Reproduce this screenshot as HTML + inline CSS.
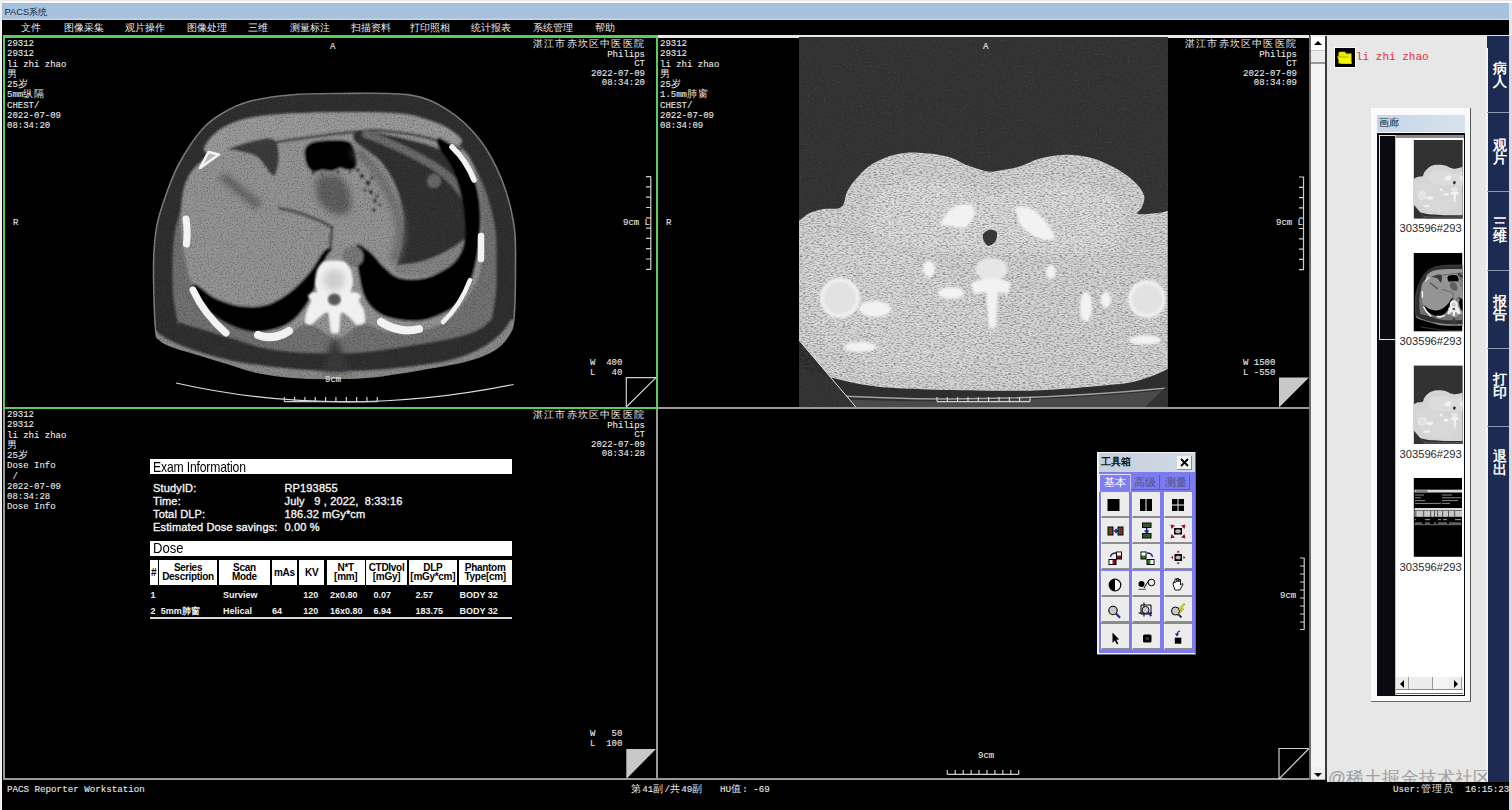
<!DOCTYPE html>
<html><head><meta charset="utf-8">
<style>
*{box-sizing:border-box}
html,body{margin:0;padding:0}
body{width:1512px;height:810px;overflow:hidden;background:#e6e6ea;position:relative;font-family:"Liberation Sans",sans-serif}
.a{position:absolute}
.cj{font-size:9.6px;letter-spacing:1.2px;line-height:0;-webkit-text-stroke:0}
.mono{font-family:"Liberation Mono",monospace;font-size:9px;line-height:10.25px;color:#e8e8e8;white-space:pre;-webkit-text-stroke:0.1px #e8e8e8}
.menu span{position:absolute;top:22px;font-size:9.6px;color:#e8e8e8;white-space:nowrap;line-height:12px}
.tab{position:absolute;left:1487px;width:22px;background:#1d2a52;color:#fff;font-weight:bold;font-size:13px;line-height:13px;text-align:center;border-top:1px solid #8d97b0}
.tab span{position:absolute;left:4px;width:14px;word-break:break-all}
.rp{white-space:nowrap}
.rl{font-size:11px;line-height:12.9px;color:#f4f4f4;letter-spacing:0.15px;-webkit-text-stroke:0.35px #f4f4f4}
.th{top:560px;height:25.2px;background:#fff;color:#000;font-size:10px;line-height:9.6px;text-align:center;padding-top:2.5px;font-weight:bold;overflow:hidden;white-space:nowrap;letter-spacing:-0.3px}
.td{font-size:9px;line-height:10px;color:#f0f0f0;font-weight:bold;white-space:nowrap}
</style></head><body>
<!-- top white line -->
<div class="a" style="left:0;top:1px;width:1512px;height:2px;background:#fbfbfd"></div>
<div class="a" style="left:0;top:0;width:2px;height:810px;background:#f2f2f4"></div>
<!-- title bar -->
<div class="a" style="left:2px;top:3px;width:1507px;height:17px;background:linear-gradient(#9fb9d3 0,#a6c2de 1.5px,#a7c1da 15px,#c2d8ee 16px)"></div>
<div class="a" style="left:4.5px;top:6px;font-size:9.4px;line-height:11px;color:#1a2840">PACS系统</div>
<!-- menu bar -->
<div class="a menu" style="left:2px;top:20px;width:1507px;height:15px;background:#000">
</div>
<div class="menu">
<span style="left:21px">文件</span>
<span style="left:64px">图像采集</span>
<span style="left:125px">观片操作</span>
<span style="left:187px">图像处理</span>
<span style="left:248px">三维</span>
<span style="left:290px">测量标注</span>
<span style="left:351px">扫描资料</span>
<span style="left:410px">打印照相</span>
<span style="left:471px">统计报表</span>
<span style="left:533px">系统管理</span>
<span style="left:595px">帮助</span>
</div>
<!-- viewport area -->
<div class="a" style="left:2px;top:35px;width:1308px;height:747px;background:#000"></div>
<!-- viewport borders -->
<div class="a" style="left:657px;top:35px;width:652px;height:3px;background:#e8e8e8"></div>
<div class="a" style="left:3px;top:407px;width:1306px;height:2px;background:#9a9a9a"></div>
<div class="a" style="left:656px;top:37px;width:2px;height:742px;background:#9a9a9a"></div>
<div class="a" style="left:3px;top:778px;width:1306px;height:2px;background:#9a9a9a"></div>
<div class="a" style="left:3px;top:408px;width:2px;height:371px;background:#9a9a9a"></div>
<!-- active green border -->
<div class="a" style="left:3px;top:35px;width:655px;height:374px;border:2px solid #5ccc5c;border-top-width:3px"></div>


<svg class="a" style="left:0;top:0" width="660" height="410" viewBox="0 0 660 410">
<g id="ctTL">
<defs><filter id="bl1" x="-5%" y="-5%" width="110%" height="110%"><feGaussianBlur stdDeviation="1.3"/></filter><filter id="bl3" x="-20%" y="-20%" width="140%" height="140%"><feGaussianBlur stdDeviation="3"/></filter></defs>
<path d="M335.0 93.5 C354.8 93.5 390.1 92.0 409.0 94.9 C427.9 97.8 436.6 103.1 448.5 110.7 C460.4 118.3 471.2 128.8 480.1 140.3 C489.0 151.8 496.2 166.0 501.8 179.8 C507.4 193.6 511.4 209.6 513.7 223.3 C516.0 237.0 515.5 246.2 515.5 262.0 C515.5 277.8 515.2 305.7 514.0 318.0 C512.8 330.3 511.3 330.7 508.0 336.0 C504.7 341.3 501.0 345.8 494.0 350.0 C487.0 354.2 478.3 357.7 466.0 361.0 C453.7 364.3 436.0 366.9 420.0 369.6 C404.0 372.3 384.2 375.6 370.0 377.0 C355.8 378.4 347.5 378.2 335.0 378.3 C322.5 378.4 307.8 378.5 295.0 377.5 C282.2 376.5 269.5 374.9 258.0 372.5 C246.5 370.1 236.5 366.2 226.0 363.0 C215.5 359.8 204.0 356.2 195.0 353.5 C186.0 350.8 177.8 348.8 172.0 346.5 C166.2 344.2 162.8 343.1 160.0 340.0 C157.2 336.9 156.5 340.8 155.4 328.0 C154.3 315.2 153.3 280.2 153.6 263.0 C153.9 245.8 154.8 236.8 157.0 225.0 C159.2 213.2 163.2 202.5 167.0 192.0 C170.8 181.5 174.2 172.4 180.0 162.0 C185.8 151.6 195.0 137.6 202.0 129.5 C209.0 121.4 214.2 118.2 222.0 113.5 C229.8 108.8 237.7 104.6 249.0 101.5 C260.3 98.4 275.7 96.3 290.0 95.0 C304.3 93.7 315.2 93.5 335.0 93.5Z" fill="#303030" stroke="#7a7a7a" stroke-width="1.6"/>
<clipPath id="bodyclip"><path d="M335.0 93.5 C354.8 93.5 390.1 92.0 409.0 94.9 C427.9 97.8 436.6 103.1 448.5 110.7 C460.4 118.3 471.2 128.8 480.1 140.3 C489.0 151.8 496.2 166.0 501.8 179.8 C507.4 193.6 511.4 209.6 513.7 223.3 C516.0 237.0 515.5 246.2 515.5 262.0 C515.5 277.8 515.2 305.7 514.0 318.0 C512.8 330.3 511.3 330.7 508.0 336.0 C504.7 341.3 501.0 345.8 494.0 350.0 C487.0 354.2 478.3 357.7 466.0 361.0 C453.7 364.3 436.0 366.9 420.0 369.6 C404.0 372.3 384.2 375.6 370.0 377.0 C355.8 378.4 347.5 378.2 335.0 378.3 C322.5 378.4 307.8 378.5 295.0 377.5 C282.2 376.5 269.5 374.9 258.0 372.5 C246.5 370.1 236.5 366.2 226.0 363.0 C215.5 359.8 204.0 356.2 195.0 353.5 C186.0 350.8 177.8 348.8 172.0 346.5 C166.2 344.2 162.8 343.1 160.0 340.0 C157.2 336.9 156.5 340.8 155.4 328.0 C154.3 315.2 153.3 280.2 153.6 263.0 C153.9 245.8 154.8 236.8 157.0 225.0 C159.2 213.2 163.2 202.5 167.0 192.0 C170.8 181.5 174.2 172.4 180.0 162.0 C185.8 151.6 195.0 137.6 202.0 129.5 C209.0 121.4 214.2 118.2 222.0 113.5 C229.8 108.8 237.7 104.6 249.0 101.5 C260.3 98.4 275.7 96.3 290.0 95.0 C304.3 93.7 315.2 93.5 335.0 93.5Z"/></clipPath>
<path clip-path="url(#bodyclip)" d="M150 336 Q170 354 230 368 Q335 388 440 370 Q500 358 518 322" fill="none" stroke="#8a8a8a" stroke-width="15" filter="url(#bl1)"/>
<g filter="url(#bl1)">
<path d="M335.1 112.5 C345.3 112.4 360.4 111.9 372.3 112.1 C384.2 112.3 397.7 112.7 406.3 113.7 C414.9 114.8 418.5 116.3 423.8 118.5 C429.1 120.6 433.3 123.3 438.0 126.6 C442.8 129.8 447.9 133.6 452.4 137.8 C456.9 142.1 461.2 146.8 465.0 151.9 C468.9 156.9 472.3 162.4 475.5 168.2 C478.7 174.0 481.6 180.5 484.2 186.9 C486.7 193.2 488.8 199.9 490.6 206.5 C492.4 213.1 494.0 220.4 494.9 226.4 C495.9 232.3 496.2 236.5 496.4 242.4 C496.7 248.4 496.5 253.9 496.5 262.0 C496.5 270.1 496.9 281.9 496.2 290.9 C495.5 299.9 493.4 310.9 492.4 315.9 C491.4 321.0 490.8 319.9 490.0 321.0 C489.2 322.2 488.7 321.9 487.8 322.8 C486.8 323.6 485.6 325.3 484.5 326.3 C483.4 327.2 483.0 327.5 481.1 328.6 C479.1 329.6 476.3 331.2 472.8 332.6 C469.2 334.0 465.2 335.4 459.7 336.8 C454.2 338.2 447.3 339.6 440.0 340.9 C432.7 342.3 424.2 343.6 415.9 344.9 C407.7 346.3 398.6 347.8 390.5 349.0 C382.5 350.2 374.0 351.4 367.4 352.1 C360.9 352.8 356.6 353.0 351.2 353.2 C345.8 353.4 340.8 353.3 334.9 353.3 C328.9 353.3 321.8 353.4 315.5 353.3 C309.1 353.2 302.8 353.0 296.8 352.6 C290.8 352.1 284.9 351.5 279.3 350.8 C273.7 350.0 268.3 349.2 263.3 348.1 C258.2 347.0 254.2 345.7 249.2 344.2 C244.2 342.7 238.7 340.8 233.4 339.1 C228.1 337.4 222.5 335.8 217.3 334.2 C212.1 332.6 206.9 331.0 202.2 329.6 C197.6 328.2 192.9 326.9 189.3 325.8 C185.7 324.7 182.9 323.8 180.7 323.1 C178.4 322.4 176.7 321.6 176.0 321.4 C175.3 321.2 176.3 321.3 176.6 321.9 C177.0 322.6 177.6 324.3 177.9 325.0 C178.2 325.7 179.3 330.9 178.5 326.2 C177.7 321.4 174.2 307.1 173.2 296.6 C172.2 286.1 172.6 272.0 172.6 263.2 C172.6 254.4 173.0 249.5 173.5 243.7 C174.0 238.0 174.6 233.6 175.6 228.6 C176.7 223.6 178.0 218.8 179.5 213.7 C181.0 208.7 183.1 203.4 184.8 198.5 C186.6 193.6 188.3 188.9 190.3 184.3 C192.2 179.8 193.9 176.1 196.6 171.2 C199.3 166.4 203.0 160.4 206.3 155.5 C209.6 150.6 213.6 145.3 216.4 141.9 C219.2 138.5 220.7 137.3 223.3 135.3 C225.8 133.3 228.5 131.7 231.7 129.8 C234.8 128.0 238.5 125.8 242.2 124.1 C245.9 122.5 249.1 121.1 254.0 119.8 C258.8 118.5 265.0 117.4 271.2 116.4 C277.5 115.4 285.1 114.5 291.7 113.9 C298.4 113.3 303.8 113.0 311.0 112.7 C318.2 112.5 324.9 112.6 335.1 112.5Z" fill="#727272"/>
<path d="M236.5 147.0 C252.7 143.0 276.9 139.2 300.0 136.0 C323.1 132.8 352.7 128.2 375.0 128.0 C397.3 127.8 418.4 130.7 433.8 135.0 C449.2 139.3 459.7 143.8 467.4 154.0 C475.1 164.2 477.6 178.5 480.0 196.0 C482.4 213.5 483.4 243.3 482.0 259.0 C480.6 274.7 478.3 279.2 471.6 290.0 C464.9 300.8 455.3 317.0 442.0 324.0 C428.7 331.0 405.1 332.0 391.8 332.0 C378.6 332.0 371.6 322.9 362.5 324.0 C353.4 325.1 346.1 338.6 337.0 338.6 C327.9 338.6 317.8 324.4 308.0 324.0 C298.2 323.6 292.5 336.7 278.5 336.0 C264.5 335.3 238.0 327.7 224.0 320.0 C210.0 312.3 201.6 303.7 194.6 290.0 C187.6 276.3 183.8 255.1 182.0 238.0 C180.2 220.9 180.5 200.5 184.0 187.5 C187.5 174.5 194.2 166.8 203.0 160.0 C211.8 153.2 220.3 151.0 236.5 147.0Z" fill="#949494"/>
<path d="M204.0 148.0 C205.2 143.7 212.7 133.3 222.0 128.0 C231.3 122.7 241.2 118.7 260.0 116.0 C278.8 113.3 311.7 112.3 335.0 112.0 C358.3 111.7 382.5 112.0 400.0 114.0 C417.5 116.0 429.7 119.7 440.0 124.0 C450.3 128.3 460.3 136.3 462.0 140.0 C463.7 143.7 457.0 146.7 450.0 146.0 C443.0 145.3 433.3 138.3 420.0 136.0 C406.7 133.7 390.0 131.8 370.0 132.0 C350.0 132.2 320.8 134.8 300.0 137.0 C279.2 139.2 259.2 142.2 245.0 145.0 C230.8 147.8 221.8 153.5 215.0 154.0 C208.2 154.5 202.8 152.3 204.0 148.0Z" fill="#9a9a9a"/>
<path d="M236 149 Q320 134 375 130 Q430 134 462 150" fill="none" stroke="#404040" stroke-width="2.5"/>
<path d="M363.0 131.0 C372.3 131.0 396.3 136.5 410.0 140.0 C423.7 143.5 435.3 146.2 445.0 152.0 C454.7 157.8 462.7 165.3 468.0 175.0 C473.3 184.7 475.7 198.3 477.0 210.0 C478.3 221.7 477.5 236.3 476.0 245.0 C474.5 253.7 472.3 258.2 468.0 262.0 C463.7 265.8 458.0 266.3 450.0 268.0 C442.0 269.7 428.7 272.0 420.0 272.0 C411.3 272.0 401.0 273.0 398.0 268.0 C395.0 263.0 401.2 250.8 402.0 242.0 C402.8 233.2 404.0 224.2 403.0 215.0 C402.0 205.8 399.8 196.0 396.0 187.0 C392.2 178.0 387.0 168.8 380.0 161.0 C373.0 153.2 356.8 145.0 354.0 140.0 C351.2 135.0 353.7 131.0 363.0 131.0Z" fill="#333333"/>
<path d="M366 134 Q410 150 440 170 Q460 185 466 200" fill="none" stroke="#6c6c6c" stroke-width="8" stroke-linecap="round"/>
<circle cx="434" cy="181" r="7" fill="#6a6a6a"/>
<path d="M396.3 266.0 C400.0 264.0 411.9 264.3 420.0 262.0 C428.1 259.7 437.2 256.2 445.0 252.0 C452.8 247.8 462.0 241.7 466.7 236.7 C471.4 231.7 471.8 220.4 473.0 222.0 C474.2 223.6 475.8 239.3 474.0 246.0 C472.2 252.7 467.7 257.7 462.0 262.0 C456.3 266.3 447.4 269.7 440.0 272.0 C432.6 274.3 424.4 275.7 417.4 276.0 C410.4 276.3 401.5 275.7 398.0 274.0 C394.5 272.3 392.6 268.0 396.3 266.0Z" fill="#848484"/>
<path d="M229.3 148.7 C234.4 146.6 261.0 137.6 269.2 138.2 C277.4 138.8 277.8 145.9 278.6 152.2 C279.4 158.4 277.4 174.9 273.9 175.7 C270.4 176.5 263.3 161.1 257.4 157.0 C251.5 152.9 243.4 152.4 238.7 151.0 C234.0 149.6 224.2 150.8 229.3 148.7Z" fill="#3c3c3c"/>
<path d="M318.0 178.0 C321.3 174.0 332.8 174.0 338.0 176.0 C343.2 178.0 347.0 184.3 349.0 190.0 C351.0 195.7 352.3 206.0 350.0 210.0 C347.7 214.0 340.3 215.7 335.0 214.0 C329.7 212.3 320.8 206.0 318.0 200.0 C315.2 194.0 314.7 182.0 318.0 178.0Z" fill="#606060" filter="url(#bl3)"/>
<path d="M222 176 Q240 190 259 206" stroke="#606060" stroke-width="8" fill="none" filter="url(#bl3)"/>
<path d="M278 208 Q305 212 332 227 L330 250" stroke="#4e4e4e" stroke-width="3" fill="none"/>
<path d="M306.0 147.0 C308.2 144.2 311.2 142.0 318.0 141.0 C324.8 140.0 340.8 139.2 347.0 141.0 C353.2 142.8 353.5 147.7 355.0 152.0 C356.5 156.3 357.2 164.0 356.0 167.0 C354.8 170.0 350.7 169.8 348.0 170.0 C345.3 170.2 342.7 167.8 340.0 168.0 C337.3 168.2 335.0 170.7 332.0 171.0 C329.0 171.3 325.0 169.8 322.0 170.0 C319.0 170.2 316.3 172.5 314.0 172.0 C311.7 171.5 309.5 169.3 308.0 167.0 C306.5 164.7 305.3 161.3 305.0 158.0 C304.7 154.7 303.8 149.8 306.0 147.0Z" fill="#050505"/>
<path d="M356 150 Q385 175 398 215 Q404 240 393 262" fill="none" stroke="#707070" stroke-width="9" filter="url(#bl3)"/>
<g fill="#141414"><circle cx="362" cy="176" r="2.2"/><circle cx="368" cy="183" r="2.4"/><circle cx="371" cy="192" r="2.2"/><circle cx="375" cy="201" r="2"/><circle cx="365" cy="190" r="1.6"/><circle cx="358" cy="170" r="1.8"/><circle cx="374" cy="210" r="1.8"/><circle cx="377" cy="196" r="1.5"/><circle cx="380" cy="205" r="1.4"/><circle cx="372" cy="178" r="1.4"/><circle cx="313" cy="173" r="1.5"/><circle cx="322" cy="174" r="1.3"/><circle cx="338" cy="172" r="1.4"/><circle cx="350" cy="172" r="1.3"/></g>
<path d="M322 372 L330 345 L334 337 L339 345 L350 372Z" fill="#3a3a3a" filter="url(#bl3)"/>
<path d="M192.5 288.0 C194.7 292.5 203.4 305.7 210.0 312.0 C216.6 318.3 224.0 322.7 232.0 326.0 C240.0 329.3 248.7 332.3 258.0 332.0 C267.3 331.7 279.8 328.7 288.0 324.0 C296.2 319.3 302.0 311.3 307.0 304.0 C312.0 296.7 314.8 287.7 318.0 280.0 C321.2 272.3 323.7 263.2 326.0 258.0 C328.3 252.8 332.3 250.2 332.0 249.0 C331.7 247.8 327.7 247.2 324.0 251.0 C320.3 254.8 315.7 265.2 310.0 272.0 C304.3 278.8 297.3 286.5 290.0 292.0 C282.7 297.5 274.3 302.7 266.0 305.0 C257.7 307.3 248.5 307.2 240.0 306.0 C231.5 304.8 222.2 301.5 215.0 298.0 C207.8 294.5 200.8 286.7 197.0 285.0 C193.2 283.3 190.3 283.5 192.5 288.0Z" fill="#000"/>
<path d="M359.6 278.0 C361.3 287.0 362.6 294.0 366.0 300.0 C369.4 306.0 374.3 310.7 380.0 314.0 C385.7 317.3 392.5 319.0 400.0 320.0 C407.5 321.0 416.1 322.0 424.8 320.0 C433.6 318.0 445.3 313.3 452.5 308.0 C459.7 302.7 464.1 295.7 468.0 288.0 C471.9 280.3 474.0 270.8 476.0 262.0 C478.0 253.2 479.3 244.5 480.0 235.0 C480.7 225.5 481.0 214.5 480.0 205.0 C479.0 195.5 477.3 186.7 474.0 178.0 C470.7 169.3 465.7 159.7 460.0 153.0 C454.3 146.3 443.7 139.2 440.0 138.0 C436.3 136.8 436.0 141.0 438.0 146.0 C440.0 151.0 448.0 159.0 452.0 168.0 C456.0 177.0 459.8 189.7 462.0 200.0 C464.2 210.3 465.0 221.7 465.0 230.0 C465.0 238.3 464.5 244.0 462.0 250.0 C459.5 256.0 456.2 261.3 450.0 266.0 C443.8 270.7 433.3 276.0 425.0 278.0 C416.7 280.0 406.7 279.7 400.0 278.0 C393.3 276.3 390.0 272.3 385.0 268.0 C380.0 263.7 374.8 255.7 370.0 252.0 C365.2 248.3 357.7 241.7 356.0 246.0 C354.3 250.3 357.9 269.0 359.6 278.0Z" fill="#000"/>
<circle cx="353" cy="256.5" r="10.5" fill="#7a7a7a"/>
</g>
<filter id="nzl" x="150" y="90" width="370" height="290" filterUnits="userSpaceOnUse"><feTurbulence type="fractalNoise" baseFrequency="0.7 0.7" numOctaves="2" seed="5"/><feColorMatrix type="matrix" values="0 0 0 0 0  0 0 0 0 0  0 0 0 0 0  2.4 0 0 0 -1.1"/></filter>
</g><rect x="150" y="90" width="370" height="290" fill="#000" filter="url(#nzl)" clip-path="url(#bodyclip)" opacity="0.3"/><g id="ctTL2">
<path d="M334.0 260.5 C336.6 260.5 343.0 260.9 345.0 262.0 C347.0 263.1 350.1 267.6 351.0 270.0 C351.9 272.4 353.0 280.4 353.0 283.0 C353.0 285.6 350.6 290.9 351.0 292.0 C351.4 293.1 354.8 291.5 356.0 292.0 C357.2 292.5 360.6 294.9 361.0 296.0 C361.4 297.1 358.6 299.4 359.0 301.0 C359.4 302.6 363.3 307.6 364.0 310.0 C364.7 312.4 365.8 320.2 365.0 322.0 C364.2 323.8 358.9 325.6 357.0 325.0 C355.1 324.4 350.9 318.4 349.0 317.0 C347.1 315.6 342.2 311.2 341.0 313.0 C339.8 314.8 340.2 329.8 339.0 332.0 C337.8 334.2 332.3 334.2 331.0 332.0 C329.7 329.8 329.3 314.8 328.0 313.0 C326.7 311.2 322.0 315.6 320.0 317.0 C318.0 318.4 312.8 324.4 311.0 325.0 C309.2 325.6 305.5 323.8 305.0 322.0 C304.5 320.2 306.3 312.4 307.0 310.0 C307.7 307.6 310.9 302.6 311.0 301.0 C311.1 299.4 307.8 297.1 308.0 296.0 C308.2 294.9 311.9 292.5 313.0 292.0 C314.1 291.5 316.8 293.1 317.0 292.0 C317.2 290.9 315.0 285.6 315.0 283.0 C315.0 280.4 316.1 272.4 317.0 270.0 C317.9 267.6 321.0 263.1 323.0 262.0 C325.0 260.9 331.4 260.5 334.0 260.5Z" fill="#f0f0f0" filter="url(#bl1)"/>
<ellipse cx="334" cy="280" rx="11" ry="11" fill="#cfcfcf" filter="url(#bl3)"/>
<ellipse cx="334.4" cy="299.5" rx="6.5" ry="6" fill="#585858" filter="url(#bl1)"/>
<g fill="none" stroke="#f2f2f2" stroke-linecap="round"><path d="M200 168 L208.5 152 L219 154.5Z" stroke-width="2.6" fill="#b8b8b8" stroke-linejoin="round"/><path d="M186 219 Q188 231 186.5 244" stroke-width="7"/><path d="M193 290 Q204 314 226 333" stroke-width="7"/><path d="M258 335 Q273 341 289 331" stroke-width="8"/><path d="M381 322 Q400 334 419 329" stroke-width="8"/><path d="M470 280 Q460 306 443 322" stroke-width="4.5"/><path d="M481 236 L481 259" stroke-width="6.5"/><path d="M452 147 Q466 160 474 180" stroke-width="5.5"/></g>
<path d="M176 383 Q340 420 513.6 384.5" fill="none" stroke="#dcdcdc" stroke-width="1.2"/>
</g></svg>
<svg class="a" style="left:0;top:0" width="1310" height="410" viewBox="0 0 1310 410">
<g id="ctTR">
<defs><filter id="tb" x="-5%" y="-5%" width="110%" height="110%"><feGaussianBlur stdDeviation="2"/></filter><filter id="tb1" x="-10%" y="-10%" width="120%" height="120%"><feGaussianBlur stdDeviation="0.8"/></filter><clipPath id="fov"><path d="M799 37H1168V385L1145 407H855.8L799 340.2Z"/></clipPath><clipPath id="trbody"><path d="M798.9 220.9 C800.7 219.6 805.7 215.0 809.8 213.0 C813.9 211.0 818.3 210.0 823.6 209.0 C828.9 208.0 837.5 209.9 841.4 207.0 C845.3 204.1 844.7 196.2 847.3 191.3 C849.9 186.4 852.9 182.0 857.2 177.4 C861.5 172.8 866.8 167.4 873.0 163.6 C879.2 159.8 887.1 156.5 894.7 154.7 C902.3 152.9 909.6 152.4 918.5 152.7 C927.4 153.0 939.8 154.5 948.0 156.7 C956.2 158.8 961.3 163.1 967.9 165.6 C974.5 168.1 982.3 170.7 987.6 171.5 C992.9 172.3 994.5 171.3 999.8 170.5 C1005.1 169.7 1012.9 168.6 1019.5 166.6 C1026.1 164.6 1031.7 160.7 1039.3 158.7 C1046.9 156.7 1056.4 154.9 1065.0 154.7 C1073.6 154.5 1082.5 155.6 1090.7 157.7 C1098.9 159.8 1107.2 163.6 1114.4 167.5 C1121.7 171.4 1129.3 176.8 1134.2 181.4 C1139.1 186.0 1142.7 190.9 1144.0 195.2 C1145.3 199.5 1143.0 203.9 1142.0 207.0 C1141.0 210.1 1135.3 213.0 1138.0 214.0 C1140.7 215.0 1153.0 213.5 1157.9 213.0 C1162.9 212.5 1166.1 211.3 1167.7 211.0 L1167.7 369 C1150 378 1130 384 1116 384.3 C1080 388 1040 391 1020 390.8 C980 391 920 390 880 387 C855 384 835 379 820 374 L799 368 Z"/></clipPath><filter id="nz" x="799" y="150" width="369" height="245" filterUnits="userSpaceOnUse"><feTurbulence type="fractalNoise" baseFrequency="0.35 0.9" numOctaves="2" seed="7"/><feColorMatrix type="matrix" values="0 0 0 0 0  0 0 0 0 0  0 0 0 0 0  2.4 0 0 0 -1.05"/></filter><filter id="nz2" x="799" y="37" width="369" height="370" filterUnits="userSpaceOnUse"><feTurbulence type="fractalNoise" baseFrequency="0.5 0.5" numOctaves="2" seed="11"/><feColorMatrix type="matrix" values="0 0 0 0 1  0 0 0 0 1  0 0 0 0 1  2.5 0 0 0 -1.45"/></filter></defs>
<rect x="799" y="37" width="369" height="370" fill="#323232"/>
</g><ellipse cx="983" cy="240" rx="215" ry="205" fill="#fff" filter="url(#nz2)" opacity="0.12"/><g id="ctTR1">
<g clip-path="url(#fov)">
<path d="M799 372 Q980 395 1168 368 V407 H799Z" fill="#2e2e2e"/>
<path d="M799 397 Q980 408 1168 390 V407 H799Z" fill="#4a4a4a"/>
<path d="M820 394.5 Q980 406 1168 388" fill="none" stroke="#a0a0a0" stroke-width="1.6"/>
<path d="M798.9 220.9 C800.7 219.6 805.7 215.0 809.8 213.0 C813.9 211.0 818.3 210.0 823.6 209.0 C828.9 208.0 837.5 209.9 841.4 207.0 C845.3 204.1 844.7 196.2 847.3 191.3 C849.9 186.4 852.9 182.0 857.2 177.4 C861.5 172.8 866.8 167.4 873.0 163.6 C879.2 159.8 887.1 156.5 894.7 154.7 C902.3 152.9 909.6 152.4 918.5 152.7 C927.4 153.0 939.8 154.5 948.0 156.7 C956.2 158.8 961.3 163.1 967.9 165.6 C974.5 168.1 982.3 170.7 987.6 171.5 C992.9 172.3 994.5 171.3 999.8 170.5 C1005.1 169.7 1012.9 168.6 1019.5 166.6 C1026.1 164.6 1031.7 160.7 1039.3 158.7 C1046.9 156.7 1056.4 154.9 1065.0 154.7 C1073.6 154.5 1082.5 155.6 1090.7 157.7 C1098.9 159.8 1107.2 163.6 1114.4 167.5 C1121.7 171.4 1129.3 176.8 1134.2 181.4 C1139.1 186.0 1142.7 190.9 1144.0 195.2 C1145.3 199.5 1143.0 203.9 1142.0 207.0 C1141.0 210.1 1135.3 213.0 1138.0 214.0 C1140.7 215.0 1153.0 213.5 1157.9 213.0 C1162.9 212.5 1166.1 211.3 1167.7 211.0 L1167.7 369 C1150 378 1130 384 1116 384.3 C1080 388 1040 391 1020 390.8 C980 391 920 390 880 387 C855 384 835 379 820 374 L799 368 Z" fill="#d4d4d4"/>
<g filter="url(#tb)">
<path d="M885.0 188.0 C898.3 180.0 932.5 180.8 950.0 182.0 C967.5 183.2 975.0 195.0 990.0 195.0 C1005.0 195.0 1021.7 182.8 1040.0 182.0 C1058.3 181.2 1085.8 184.5 1100.0 190.0 C1114.2 195.5 1123.3 205.0 1125.0 215.0 C1126.7 225.0 1120.8 243.3 1110.0 250.0 C1099.2 256.7 1080.0 255.0 1060.0 255.0 C1040.0 255.0 1013.3 250.8 990.0 250.0 C966.7 249.2 940.0 253.3 920.0 250.0 C900.0 246.7 875.8 240.3 870.0 230.0 C864.2 219.7 871.7 196.0 885.0 188.0Z" fill="#dcdcdc"/>
<path d="M810.0 250.0 C816.7 235.0 841.7 238.3 860.0 240.0 C878.3 241.7 900.0 250.0 920.0 260.0 C940.0 270.0 966.7 286.7 980.0 300.0 C993.3 313.3 1003.3 328.3 1000.0 340.0 C996.7 351.7 980.0 365.0 960.0 370.0 C940.0 375.0 903.3 376.7 880.0 370.0 C856.7 363.3 831.7 350.0 820.0 330.0 C808.3 310.0 803.3 265.0 810.0 250.0Z" fill="#d8d8d8"/>
</g>
</g></g><rect x="799" y="150" width="369" height="245" fill="#000" filter="url(#nz)" clip-path="url(#trbody)" opacity="0.4"/><g id="ctTR2"><g clip-path="url(#fov)">
<g fill="#f2f2f2" filter="url(#tb1)"><ellipse cx="991.5" cy="269.5" rx="16" ry="11.5" fill="#e6e6e6"/><path d="M971 283 Q991 274 1011 283 L1008 294 L998 292 L996 328 L989 328 L986 292 L974 294Z"/><ellipse cx="875" cy="309" rx="16" ry="8"/><ellipse cx="860" cy="347" rx="16" ry="5"/><ellipse cx="929" cy="269" rx="6" ry="8"/><ellipse cx="951" cy="293" rx="13" ry="6"/><ellipse cx="1051" cy="272" rx="5" ry="7"/><ellipse cx="1086" cy="307" rx="6" ry="15"/><ellipse cx="1106" cy="300" rx="5" ry="8"/><ellipse cx="1145" cy="340" rx="16" ry="4.5"/><path d="M940 225 Q950 200 972 205 Q980 215 965 228 Z"/><path d="M1015 208 Q1035 200 1056 238 Q1040 245 1020 225 Z"/></g>
<g fill="#e2e2e2" stroke="#f0f0f0" stroke-width="4" filter="url(#tb1)"><circle cx="840" cy="298" r="18"/><circle cx="1147" cy="299" r="17"/></g>
<path d="M983 234 Q990 226 997 232 Q998 244 988 246 Q982 242 983 234Z" fill="#383838"/>
</g>
<path d="M799 340.2 L855.8 407" stroke="#e0e0e0" stroke-width="1"/>
</g></svg>
<!-- ===== overlays ===== -->
<svg class="a" style="left:0;top:0" width="1512" height="810" viewBox="0 0 1512 810">
 <g stroke="#cfcfcf" stroke-width="1.2" fill="none">
  <!-- TL right ruler -->
  <path d="M650.8 176.6V269.3M646 176.6H651M646 186.9H651M646 197.2H651M646 207.5H651M646 217.8H651M646 228.1H651M646 238.4H651M646 248.7H651M646 259H651M646 269.3H651"/>
  <!-- TR right ruler -->
  <path d="M1303.5 177V269.6M1299 177H1304M1299 187.3H1304M1299 197.6H1304M1299 207.9H1304M1299 218.2H1304M1299 228.5H1304M1299 238.8H1304M1299 249.1H1304M1299 259.4H1304M1299 269.6H1304"/>
  <!-- BR right ruler -->
  <path d="M1304.2 558V629.5M1300 558H1304.5M1300 566H1304.5M1300 574H1304.5M1300 582H1304.5M1300 590H1304.5M1300 598H1304.5M1300 606H1304.5M1300 614H1304.5M1300 622H1304.5M1300 629.5H1304.5"/>
  <!-- BR bottom ruler -->
  <path d="M947.3 774.4H1018.7M947.3 770V774.4M955.2 770V774.4M963.2 770V774.4M971.1 770V774.4M979 770V774.4M987 770V774.4M994.9 770V774.4M1002.8 770V774.4M1010.8 770V774.4M1018.7 770V774.4"/>
  <!-- TL bottom ruler -->
  <path d="M284.3 401.6H377.3M284.3 397V401.6M294.6 397V401.6M304.9 397V401.6M315.3 397V401.6M325.6 397V401.6M335.9 397V401.6M346.3 397V401.6M356.6 397V401.6M366.9 397V401.6M377.3 397V401.6"/>
  <!-- TR bottom ruler -->
  <path d="M937 401.6H1030M937 397V401.6M947.3 397V401.6M957.6 397V401.6M968 397V401.6M978.3 397V401.6M988.6 397V401.6M999 397V401.6M1009.3 397V401.6M1019.6 397V401.6M1030 397V401.6"/>
  <!-- triangles -->
  <path d="M626.3 407V377.6H656M626.3 407L656 377.6"/>
  <path d="M1279 779V748.5H1309M1279 779L1309 748.5"/>
 </g>
 <path d="M1279 377.6H1309L1279 407.5Z" fill="#c8c8c8"/>
 <path d="M626.3 749H656L626.3 779Z" fill="#c8c8c8"/>
</svg>
<div class="a mono" style="left:7px;top:39px">29312
29312
li zhi zhao
<span class="cj">男</span>
25<span class="cj">岁</span>
5mm<span class="cj">纵隔</span>
CHEST/
2022-07-09
08:34:20</div>
<div class="a mono" style="left:500px;top:41px;width:145px;text-align:right;line-height:9.55px"><span class="cj">湛江市赤坎区中医医院</span>
Philips
CT
2022-07-09
08:34:20</div>
<div class="a mono" style="left:330px;top:42px">A</div>
<div class="a mono" style="left:13px;top:218px">R</div>
<div class="a mono" style="left:623px;top:218px">9cm L</div>
<div class="a mono" style="left:590px;top:358px">W  400
L   40</div>
<div class="a mono" style="left:325px;top:375px">9cm</div>

<div class="a mono" style="left:660px;top:39px">29312
29312
li zhi zhao
<span class="cj">男</span>
25<span class="cj">岁</span>
1.5mm<span class="cj">肺窗</span>
CHEST/
2022-07-09
08:34:09</div>
<div class="a mono" style="left:1152px;top:41px;width:145px;text-align:right;line-height:9.55px"><span class="cj">湛江市赤坎区中医医院</span>
Philips
CT
2022-07-09
08:34:09</div>
<div class="a mono" style="left:983px;top:42px">A</div>
<div class="a mono" style="left:666px;top:218px">R</div>
<div class="a mono" style="left:1276px;top:218px">9cm L</div>
<div class="a mono" style="left:1243px;top:358px">W 1500
L -550</div>

<div class="a mono" style="left:7px;top:410px">29312
29312
li zhi zhao
<span class="cj">男</span>
25<span class="cj">岁</span>
Dose Info
 /
2022-07-09
08:34:28
Dose Info</div>
<div class="a mono" style="left:500px;top:412px;width:145px;text-align:right;line-height:9.55px"><span class="cj">湛江市赤坎区中医医院</span>
Philips
CT
2022-07-09
08:34:28</div>
<div class="a mono" style="left:590px;top:729px">W   50
L  100</div>
<div class="a mono" style="left:1280px;top:591px">9cm</div>
<div class="a mono" style="left:978px;top:751px">9cm</div>


<!-- ===== dose report ===== -->
<div class="a" style="left:149.5px;top:459px;width:362px;height:15px;background:#fff"></div>
<div class="a rp" style="left:153px;top:460px;font-size:14.5px;line-height:15px;color:#000;letter-spacing:-0.2px;transform-origin:0 0;transform:scaleX(0.84)">Exam Information</div>
<div class="a rp rl" style="left:153px;top:482px">StudyID:<br>Time:<br>Total DLP:<br>Estimated Dose savings:</div>
<div class="a rp rl" style="left:284.5px;top:482px">RP193855<br>July &nbsp; 9 , 2022, &nbsp;8:33:16<br>186.32 mGy*cm<br>0.00 %</div>
<div class="a" style="left:149.5px;top:541px;width:362px;height:15px;background:#fff"></div>
<div class="a rp" style="left:153px;top:541px;font-size:14.5px;line-height:15px;color:#000;transform-origin:0 0;transform:scaleX(0.9)">Dose</div>
<div class="a th" style="left:149.8px;width:7.8px;padding-top:7.5px">#</div>
<div class="a th" style="left:158.8px;width:58.5px">Series<br>Description</div>
<div class="a th" style="left:218.9px;width:51.1px">Scan<br>Mode</div>
<div class="a th" style="left:271.7px;width:25.3px;padding-top:7.5px">mAs</div>
<div class="a th" style="left:298.9px;width:25.5px;padding-top:7.5px">KV</div>
<div class="a th" style="left:326.9px;width:37.7px">N*T<br>[mm]</div>
<div class="a th" style="left:366.2px;width:40.7px">CTDIvol<br>[mGy]</div>
<div class="a th" style="left:408.6px;width:48.4px">DLP<br>[mGy*cm]</div>
<div class="a th" style="left:458.8px;width:52.8px">Phantom<br>Type[cm]</div>
<div class="a td" style="left:150.5px;top:590px">1</div>
<div class="a td" style="left:222.9px;top:590px">Surview</div>
<div class="a td" style="left:303.3px;top:590px">120</div>
<div class="a td" style="left:330px;top:590px">2x0.80</div>
<div class="a td" style="left:373.4px;top:590px">0.07</div>
<div class="a td" style="left:415.5px;top:590px">2.57</div>
<div class="a td" style="left:459.5px;top:590px">BODY 32</div>
<div class="a td" style="left:150.5px;top:606px">2</div>
<div class="a td" style="left:160.7px;top:606px">5mm肺窗</div>
<div class="a td" style="left:222.9px;top:606px">Helical</div>
<div class="a td" style="left:271.9px;top:606px">64</div>
<div class="a td" style="left:303.3px;top:606px">120</div>
<div class="a td" style="left:330px;top:606px">16x0.80</div>
<div class="a td" style="left:373.4px;top:606px">6.94</div>
<div class="a td" style="left:415.5px;top:606px">183.75</div>
<div class="a td" style="left:459.5px;top:606px">BODY 32</div>
<div class="a" style="left:149.5px;top:617px;width:362px;height:1.5px;background:#d8d8d8"></div>


<!-- ===== toolbox ===== -->
<div class="a" style="left:1097px;top:452px;width:99px;height:203px;background:#f2f2f6;border-right:1px solid #6a6a70;border-bottom:1px solid #6a6a70"></div>
<div class="a" style="left:1099px;top:453px;width:96px;height:19px;background:linear-gradient(90deg,#c4d0dc,#d0dae4)"></div>
<div class="a" style="left:1101px;top:456px;font-size:10px;line-height:12px;color:#101820;font-weight:bold">工具箱</div>
<div class="a" style="left:1177px;top:456px;width:15px;height:14px;background:#f4f4f4;border-right:1px solid #8a8a8a;border-bottom:1px solid #8a8a8a"></div>
<svg class="a" style="left:1180px;top:458px" width="9" height="9" viewBox="0 0 9 9"><path d="M1 1L8 8M8 1L1 8" stroke="#000" stroke-width="1.8"/></svg>
<div class="a" style="left:1099px;top:472px;width:96px;height:181px;background:#7c7cf0"></div>
<div class="a" style="left:1099px;top:474px;width:32px;height:18px;background:#7e7ef2;border-left:1px solid #e8e8ff;border-top:1px solid #e8e8ff;border-right:1px solid #c8c8ff"></div>
<div class="a" style="left:1131px;top:475px;width:29px;height:15px;border-right:1px solid #5a5ab0;border-bottom:1px solid #5a5ab0"></div>
<div class="a" style="left:1160px;top:475px;width:30px;height:15px;border-right:1px solid #5a5ab0;border-bottom:1px solid #5a5ab0"></div>
<div class="a" style="left:1104px;top:476px;font-size:10.5px;line-height:12px;color:#fff">基本</div>
<div class="a" style="left:1134px;top:476px;font-size:10.5px;line-height:12px;color:#50507a">高级</div>
<div class="a" style="left:1165px;top:476px;font-size:10.5px;line-height:12px;color:#50507a">测量</div>
<div class="a" style="left:1100.5px;top:491.5px;width:28px;height:26px;background:#ececec;border-bottom:2px solid #8c8c8c;border-left:1px solid #fafafa"></div>
<div class="a" style="left:1132px;top:491.5px;width:28px;height:26px;background:#ececec;border-bottom:2px solid #8c8c8c;border-left:1px solid #fafafa"></div>
<div class="a" style="left:1164px;top:491.5px;width:28px;height:26px;background:#ececec;border-bottom:2px solid #8c8c8c;border-left:1px solid #fafafa"></div>
<div class="a" style="left:1100.5px;top:517.5px;width:28px;height:26px;background:#ececec;border-bottom:2px solid #8c8c8c;border-left:1px solid #fafafa"></div>
<div class="a" style="left:1132px;top:517.5px;width:28px;height:26px;background:#ececec;border-bottom:2px solid #8c8c8c;border-left:1px solid #fafafa"></div>
<div class="a" style="left:1164px;top:517.5px;width:28px;height:26px;background:#ececec;border-bottom:2px solid #8c8c8c;border-left:1px solid #fafafa"></div>
<div class="a" style="left:1100.5px;top:544px;width:28px;height:26px;background:#ececec;border-bottom:2px solid #8c8c8c;border-left:1px solid #fafafa"></div>
<div class="a" style="left:1132px;top:544px;width:28px;height:26px;background:#ececec;border-bottom:2px solid #8c8c8c;border-left:1px solid #fafafa"></div>
<div class="a" style="left:1164px;top:544px;width:28px;height:26px;background:#ececec;border-bottom:2px solid #8c8c8c;border-left:1px solid #fafafa"></div>
<div class="a" style="left:1100.5px;top:570.5px;width:28px;height:26px;background:#ececec;border-bottom:2px solid #8c8c8c;border-left:1px solid #fafafa"></div>
<div class="a" style="left:1132px;top:570.5px;width:28px;height:26px;background:#ececec;border-bottom:2px solid #8c8c8c;border-left:1px solid #fafafa"></div>
<div class="a" style="left:1164px;top:570.5px;width:28px;height:26px;background:#ececec;border-bottom:2px solid #8c8c8c;border-left:1px solid #fafafa"></div>
<div class="a" style="left:1100.5px;top:597px;width:28px;height:26px;background:#ececec;border-bottom:2px solid #8c8c8c;border-left:1px solid #fafafa"></div>
<div class="a" style="left:1132px;top:597px;width:28px;height:26px;background:#ececec;border-bottom:2px solid #8c8c8c;border-left:1px solid #fafafa"></div>
<div class="a" style="left:1164px;top:597px;width:28px;height:26px;background:#ececec;border-bottom:2px solid #8c8c8c;border-left:1px solid #fafafa"></div>
<div class="a" style="left:1100.5px;top:624px;width:28px;height:26px;background:#ececec;border-bottom:2px solid #8c8c8c;border-left:1px solid #fafafa"></div>
<div class="a" style="left:1132px;top:624px;width:28px;height:26px;background:#ececec;border-bottom:2px solid #8c8c8c;border-left:1px solid #fafafa"></div>
<div class="a" style="left:1164px;top:624px;width:28px;height:26px;background:#ececec;border-bottom:2px solid #8c8c8c;border-left:1px solid #fafafa"></div>
<svg class="a" style="left:0;top:0" width="1200" height="660" viewBox="0 0 1200 660">
<!-- row1 -->
<rect x="1107.5" y="499" width="12" height="12" fill="#000"/>
<rect x="1140" y="499" width="5.5" height="12" fill="#000"/><rect x="1146.5" y="499" width="5.5" height="12" fill="#000"/>
<rect x="1172" y="499" width="5.5" height="5.5" fill="#000"/><rect x="1178.5" y="499" width="5.5" height="5.5" fill="#000"/>
<rect x="1172" y="505.5" width="5.5" height="5.5" fill="#000"/><rect x="1178.5" y="505.5" width="5.5" height="5.5" fill="#000"/>
<!-- row2 -->
<rect x="1108" y="527" width="5" height="8" fill="#2a6a2a" stroke="#000" stroke-width="1"/><rect x="1118" y="527" width="5" height="8" fill="#2a6a2a" stroke="#000" stroke-width="1"/><path d="M1110.5 527.5V534.5M1120.5 527.5V534.5" stroke="#8a1a20" stroke-width="1"/>
<path d="M1113.5 531H1117M1115.5 529L1117.5 531L1115.5 533" stroke="#1a1aa0" stroke-width="1.4" fill="none"/>
<rect x="1142.5" y="523" width="8.5" height="4.5" fill="#2a6a2a" stroke="#000" stroke-width="1"/><rect x="1142.5" y="533.5" width="8.5" height="4.5" fill="#2a6a2a" stroke="#000" stroke-width="1"/><path d="M1143 525.2H1150.5M1143 535.7H1150.5" stroke="#8a1a20" stroke-width="1"/>
<path d="M1146.7 528V532M1144.7 530.5L1146.7 532.5L1148.7 530.5" stroke="#1a1aa0" stroke-width="1.4" fill="none"/>
<rect x="1174" y="528" width="8" height="6.5" fill="#000"/><ellipse cx="1178" cy="531.2" rx="2.8" ry="2" fill="#b8b8b8"/>
<path d="M1170.5 524.5L1175 525.5L1171.5 529ZM1185.5 524.5L1181 525.5L1184.5 529ZM1170.5 538.5L1175 537.5L1171.5 534ZM1185.5 538.5L1181 537.5L1184.5 534Z" fill="#a01020"/>
<!-- row3 -->
<rect x="1116.5" y="552" width="5" height="7" fill="#8a1020" stroke="#000" stroke-width="1"/><rect x="1117" y="552.5" width="4" height="3" fill="#fff"/><rect x="1109" y="559.5" width="7" height="5" fill="#8a1020" stroke="#000" stroke-width="1"/><rect x="1109.5" y="560" width="3" height="4" fill="#fff"/>
<path d="M1116 553Q1111 553 1110.5 557" stroke="#1a1aa0" stroke-width="1.3" fill="none"/>
<rect x="1141" y="552" width="5" height="7" fill="#2a7a2a" stroke="#000" stroke-width="1"/><rect x="1141.5" y="552.5" width="4" height="3" fill="#fff"/><rect x="1147" y="559.5" width="7" height="5" fill="#2a7a2a" stroke="#000" stroke-width="1"/><rect x="1150.5" y="560" width="3" height="4" fill="#fff"/>
<path d="M1147 553Q1152 553 1152.5 557" stroke="#1a1aa0" stroke-width="1.3" fill="none"/>
<rect x="1174.5" y="554" width="7.5" height="7" fill="#000"/><ellipse cx="1178.2" cy="557.5" rx="2.6" ry="2" fill="#b8b8b8"/>
<path d="M1178.2 550.5L1176.5 552.5H1180ZM1178.2 564.5L1176.5 562.5H1180ZM1171 557.5L1173 555.8V559.2ZM1185.4 557.5L1183.4 555.8V559.2Z" fill="#a01020"/>
<!-- row4 -->
<circle cx="1115" cy="585" r="5.8" fill="#fff" stroke="#000" stroke-width="1.2"/><path d="M1115 579.2A5.8 5.8 0 0 0 1115 590.8Z" fill="#000"/>
<circle cx="1141.5" cy="584" r="3" fill="#000"/><path d="M1144 588L1149 580" stroke="#000" stroke-width="1"/><circle cx="1151.5" cy="582.5" r="3.3" fill="none" stroke="#000" stroke-width="1"/><path d="M1138.5 589.3H1146" stroke="#444" stroke-width="1"/>
<path d="M1173 584L1174 581.5L1175 583V579L1176.5 578.8L1177 582V578.5L1178.5 578.5L1179 582V579.5L1180.5 579.5V585L1182 583.5L1183 584L1180 590H1175Z" fill="#fff" stroke="#000" stroke-width="0.9"/>
<!-- row5 -->
<circle cx="1113" cy="610.5" r="4.2" fill="#c8c8c8" stroke="#000" stroke-width="1.1"/><path d="M1116 613.5L1120 617.8" stroke="#2a2aa0" stroke-width="2.2"/>
<path d="M1141 605H1151V614H1141ZM1144 602.5V616.5M1138.5 613H1152M1148 603" fill="none" stroke="#000" stroke-width="1"/><circle cx="1145.5" cy="610" r="3.5" fill="#c8c8c8" stroke="#000" stroke-width="0.9"/><path d="M1148 612.5L1151.5 616" stroke="#2a2aa0" stroke-width="2"/>
<circle cx="1175.5" cy="611" r="4" fill="#c8c8c8" stroke="#000" stroke-width="1"/><path d="M1178 614L1181.5 617.5" stroke="#2a2aa0" stroke-width="2"/><path d="M1183 604L1178 610L1181 610L1177 616L1184 609L1181 609L1185 604Z" fill="#e8e820" stroke="#707000" stroke-width="0.5"/>
<!-- row6 -->
<path d="M1112.5 632.5V643L1114.8 640.5L1117 644.5L1118.3 643.6L1116.3 639.8L1119.2 639.5Z" fill="#000"/>
<rect x="1143" y="634.5" width="8.5" height="8" rx="1.5" fill="#000"/><rect x="1145.5" y="637" width="3.5" height="3" fill="#333"/>
<rect x="1174.8" y="637.7" width="6.5" height="6" fill="#000"/><path d="M1180 631Q1177 631.5 1177 635M1175.5 633.5L1177 635.5L1178.5 633.5" stroke="#1a1aa0" stroke-width="1.1" fill="none"/>
</svg>

<!-- scrollbar -->
<div class="a" style="left:1309px;top:36px;width:2px;height:744px;background:#6a6a6a"></div>
<div class="a" style="left:1311px;top:36px;width:14px;height:744px;background:#f4f4f4"></div>
<div class="a" style="left:1311px;top:37px;width:14px;height:14px;background:#fff;border-bottom:1px solid #c8c8c8"></div>
<div class="a" style="left:1314px;top:41px;width:0;height:0;border-left:4px solid transparent;border-right:4px solid transparent;border-bottom:4px solid #000"></div>
<div class="a" style="left:1311px;top:51px;width:14px;height:13px;background:#ececec;border-bottom:2px solid #9a9a9a"></div>
<div class="a" style="left:1311px;top:766.5px;width:14px;height:13.5px;background:#efefef;border-bottom:1px solid #b0b0b0"></div>
<div class="a" style="left:1314px;top:772.5px;width:0;height:0;border-left:4px solid transparent;border-right:4px solid transparent;border-top:4px solid #000"></div>
<div class="a" style="left:1325px;top:36px;width:2px;height:746px;background:#3a3a3a"></div>

<!-- right panel -->
<div class="a" style="left:1327px;top:36px;width:160px;height:746px;background:#e7e7e7"></div>
<div class="a" style="left:1334px;top:47px;width:22px;height:21px;background:#fafafa"></div>
<div class="a" style="left:1335px;top:48px;width:19.5px;height:19px;background:#000"></div>
<svg class="a" style="left:0;top:0" width="1360" height="70" viewBox="0 0 1360 70"><path d="M1338.5 53.5 Q1338.5 51.8 1340 51.8 H1345 L1346 53.5 H1351.5 V63.5 H1338.5Z" fill="#e8e800"/><path d="M1337 56.5 H1348.5 L1352 63.8 H1340.8Z" fill="#f4f400"/><path d="M1338 57 H1348" stroke="#a8a800" stroke-width="1"/></svg>
<div class="a" style="left:1356px;top:51px;font-family:'Liberation Mono',monospace;font-size:11px;line-height:12px;color:#e83030;white-space:pre">li zhi zhao</div>

<!-- gallery -->
<div class="a" style="left:1371px;top:108px;width:100px;height:594px;background:#fafafc;border-right:1.5px solid #5a5a5a;border-bottom:1.5px solid #6a6a6a"></div>
<div class="a" style="left:1377px;top:115px;width:88px;height:17px;background:linear-gradient(90deg,#c6d6e6,#d6e2ee)"></div>
<div class="a" style="left:1379px;top:117px;font-size:10px;line-height:12px;color:#202020">画廊</div>
<div class="a" style="left:1377px;top:133px;width:88px;height:563px;background:#0a0a10"></div>
<div class="a" style="left:1379px;top:135px;width:16px;height:205px;border:1px solid #e0e0e0;border-right:none"></div>
<div class="a" style="left:1395px;top:135px;width:69px;height:560px;background:#fff;border-left:1px solid #c0c0c0"></div>
<div class="a" style="left:1396px;top:135px;width:68px;height:3px;background:#8a8a8e"></div>
<svg class="a" style="left:0;top:0" width="1470" height="600" viewBox="0 0 1470 600">
<clipPath id="th1"><rect x="1413.7" y="140" width="48.8" height="78.5"/></clipPath><clipPath id="th2"><rect x="1413.5" y="253" width="49" height="78.6"/></clipPath><clipPath id="th3"><rect x="1413.7" y="365.6" width="48.8" height="78.5"/></clipPath><g clip-path="url(#th1)"><rect x="1413.7" y="140" width="48.8" height="78.5" fill="#000"/><use href="#ctTR" transform="translate(1243.51,132.12) scale(0.213)"/><use href="#ctTR1" transform="translate(1243.51,132.12) scale(0.213)"/><use href="#ctTR2" transform="translate(1243.51,132.12) scale(0.213)"/></g>
<g clip-path="url(#th2)"><rect x="1413.5" y="253" width="49" height="78.6" fill="#000"/><use href="#ctTL" transform="translate(1382.62,245.12) scale(0.213)"/><use href="#ctTL2" transform="translate(1382.62,245.12) scale(0.213)"/></g>
<g clip-path="url(#th3)"><rect x="1413.7" y="365.6" width="48.8" height="78.5" fill="#000"/><use href="#ctTR" transform="translate(1243.51,357.72) scale(0.213)"/><use href="#ctTR1" transform="translate(1243.51,357.72) scale(0.213)"/><use href="#ctTR2" transform="translate(1243.51,357.72) scale(0.213)"/></g>
<rect x="1413.8" y="478" width="48.2" height="78.8" fill="#000"/>
<rect x="1414.5" y="489.7" width="47.5" height="2.8" fill="#dcdcdc"/><rect x="1415.5" y="490.4" width="12" height="1.4" fill="#666"/>
<g fill="#8a8a8a"><rect x="1415" y="494.5" width="9" height="1"/><rect x="1415" y="497.3" width="6" height="1"/><rect x="1415" y="500.1" width="10" height="1"/><rect x="1415" y="502.9" width="26" height="1"/><rect x="1442" y="494.5" width="10" height="1"/><rect x="1442" y="497.3" width="19" height="1"/><rect x="1442" y="500.1" width="16" height="1"/><rect x="1442" y="502.9" width="8" height="1"/></g>
<rect x="1414.5" y="508" width="47.5" height="2.5" fill="#dcdcdc"/>
<rect x="1414.5" y="511" width="47.5" height="5.8" fill="#c8c8c8"/>
<g fill="#000"><rect x="1415.6" y="511" width="0.6" height="5.8"/><rect x="1423.5" y="511" width="0.6" height="5.8"/><rect x="1430.5" y="511" width="0.6" height="5.8"/><rect x="1434" y="511" width="0.6" height="5.8"/><rect x="1437.5" y="511" width="0.6" height="5.8"/><rect x="1442.5" y="511" width="0.6" height="5.8"/><rect x="1448" y="511" width="0.6" height="5.8"/><rect x="1454.5" y="511" width="0.6" height="5.8"/></g>
<g fill="#8a8a8a"><rect x="1415" y="519" width="1" height="1.2"/><rect x="1425" y="519" width="5" height="1.2"/><rect x="1438" y="519" width="3" height="1.2"/><rect x="1443" y="519" width="4" height="1.2"/><rect x="1455" y="519" width="6" height="1.2"/><rect x="1415" y="522.5" width="7" height="1.2"/><rect x="1425" y="522.5" width="5" height="1.2"/><rect x="1434" y="522.5" width="2" height="1.2"/><rect x="1438" y="522.5" width="9" height="1.2"/><rect x="1449" y="522.5" width="12" height="1.2"/></g>
<rect x="1414.5" y="524.5" width="47.5" height="0.6" fill="#bbb"/>
</svg>
<div class="a" style="left:1399.5px;top:222px;font-size:11.2px;line-height:12px;color:#2a2a2a">303596#293</div>
<div class="a" style="left:1399.5px;top:335px;font-size:11.2px;line-height:12px;color:#2a2a2a">303596#293</div>
<div class="a" style="left:1399.5px;top:448px;font-size:11.2px;line-height:12px;color:#2a2a2a">303596#293</div>
<div class="a" style="left:1399.5px;top:561px;font-size:11.2px;line-height:12px;color:#2a2a2a">303596#293</div>
<!-- h scrollbar -->
<div class="a" style="left:1396px;top:677px;width:67px;height:13px;background:#f4f4f4;border-bottom:1px solid #8a8a8a"></div>
<div class="a" style="left:1396px;top:677px;width:13px;height:12px;background:#ececec;border-right:1px solid #9a9a9a"></div>
<div class="a" style="left:1400px;top:680px;width:0;height:0;border-top:4px solid transparent;border-bottom:4px solid transparent;border-right:4px solid #000"></div>
<div class="a" style="left:1410px;top:677px;width:23px;height:12px;background:#ececec;border-right:1px solid #9a9a9a"></div>
<div class="a" style="left:1449px;top:677px;width:13px;height:12px;background:#ececec;border-right:1px solid #9a9a9a"></div>
<div class="a" style="left:1454px;top:680px;width:0;height:0;border-top:4px solid transparent;border-bottom:4px solid transparent;border-left:4px solid #000"></div>
<div class="a" style="left:1396px;top:693px;width:67px;height:1px;background:#6a6a70"></div>

<!-- watermark -->

<!-- tabs -->
<div class="a" style="left:1487px;top:36px;width:22px;height:746px;background:#1d2a52"></div>
<div class="a" style="left:1486px;top:48px;width:2px;height:734px;background:#f4f4f8"></div>
<div class="a" style="left:1509px;top:36px;width:3px;height:774px;background:#d8d8dc"></div>
<div class="tab" style="top:112px;height:1px"></div>
<div class="tab" style="top:191px;height:1px"></div>
<div class="tab" style="top:270px;height:1px"></div>
<div class="tab" style="top:348px;height:1px"></div>
<div class="tab" style="top:426px;height:1px"></div>
<div class="a" style="left:1489px;top:62px;width:22px;text-align:center;font-size:13.5px;line-height:13px;font-weight:bold;color:#fff">病人</div>
<div class="a" style="left:1489px;top:139px;width:22px;text-align:center;font-size:13.5px;line-height:13px;font-weight:bold;color:#fff">观片</div>
<div class="a" style="left:1489px;top:217px;width:22px;text-align:center;font-size:13.5px;line-height:13px;font-weight:bold;color:#fff">三维</div>
<div class="a" style="left:1489px;top:295px;width:22px;text-align:center;font-size:13.5px;line-height:13px;font-weight:bold;color:#fff">报告</div>
<div class="a" style="left:1489px;top:373px;width:22px;text-align:center;font-size:13.5px;line-height:13px;font-weight:bold;color:#fff">打印</div>
<div class="a" style="left:1489px;top:450px;width:22px;text-align:center;font-size:13.5px;line-height:13px;font-weight:bold;color:#fff">退出</div>

<!-- status bar -->
<div class="a" style="left:2px;top:780px;width:1325px;height:30px;background:#000"></div><div class="a" style="left:1327px;top:782px;width:182px;height:28px;background:#000"></div>
<div class="a mono" style="left:7px;top:785px;font-size:9.2px">PACS Reporter Workstation</div>
<div class="a mono" style="left:631px;top:785px;font-size:9.2px"><span class="cj">第</span>41<span class="cj">副</span>/<span class="cj">共</span>49<span class="cj">副</span>   HU<span class="cj">值</span>: -69</div>
<div class="a mono" style="left:1393px;top:785px;font-size:9.2px">User:<span class="cj">管理员</span>  16:15:23</div>

<div class="a" style="left:1327px;top:740px;width:160px;height:42px;overflow:hidden"><div class="a" style="left:1px;top:28px;font-size:17.6px;line-height:20px;color:#a0a0a0;white-space:nowrap;letter-spacing:0.2px">@稀土掘金技术社区</div></div>
</body></html>
